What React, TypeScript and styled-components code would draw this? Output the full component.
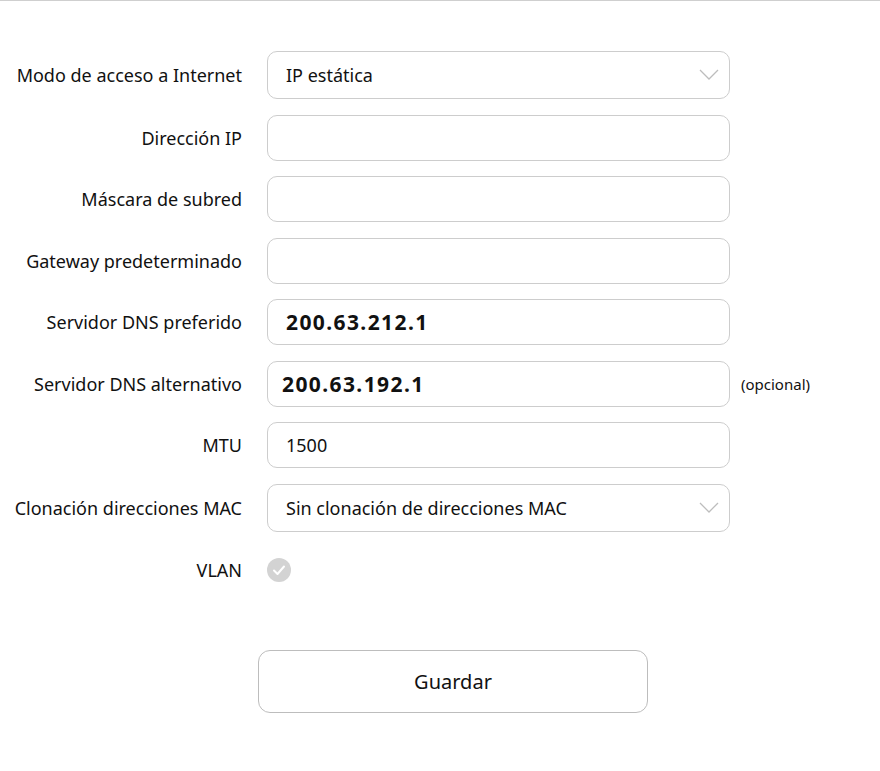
import React from "react";
import styled, { createGlobalStyle } from "styled-components";

const GlobalStyle = createGlobalStyle`
  html, body {
    margin: 0;
    padding: 0;
    background: #ffffff;
  }
  body {
    font-family: "Noto Sans", "Open Sans", sans-serif;
    color: #111111;
  }
`;

const Page = styled.div`
  border-top: 1px solid #cfcfcf;
  padding-top: 50px;
  width: 880px;
`;

const Form = styled.div`
  display: flex;
  flex-direction: column;
  gap: 15.5px;
`;

const Row = styled.div`
  display: flex;
  align-items: center;
`;

const Label = styled.div`
  width: 242px;
  margin-right: 25px;
  text-align: right;
  font-size: 18px;
  white-space: nowrap;
  color: #111111;
`;

const Field = styled.div<{ $tall?: boolean }>`
  position: relative;
  width: 463px;
  height: ${(p) => (p.$tall ? 48 : 46)}px;
  box-sizing: border-box;
  border: 1px solid #cdcdcd;
  border-radius: 10px;
  display: flex;
  align-items: center;
  padding-left: 18px;
  background: #fff;
`;

const Value = styled.span<{ $bold?: boolean; $indent?: number }>`
  font-size: ${(p) => (p.$bold ? 21 : 18)}px;
  font-weight: ${(p) => (p.$bold ? 700 : 400)};
  letter-spacing: ${(p) => (p.$bold ? 1.4 : 0)}px;
  margin-left: ${(p) => p.$indent ?? 0}px;
  color: #111111;
`;

const Chevron = styled.svg`
  position: absolute;
  right: 10px;
  top: 50%;
  margin-top: -6px;
`;

const Note = styled.span`
  margin-left: 11px;
  font-size: 15px;
  color: #111111;
`;

const RoundCheck = styled.div`
  width: 24px;
  height: 24px;
  border-radius: 50%;
  background: #d3d3d3;
  display: flex;
  align-items: center;
  justify-content: center;
`;

const VlanRow = styled(Row)`
  height: 46px;
`;

const SaveButton = styled.button`
  display: block;
  margin: 57px 0 0 258px;
  width: 390px;
  height: 63px;
  border: 1px solid #bdbdbd;
  border-radius: 12px;
  background: #fff;
  font-family: "Noto Sans", "Open Sans", sans-serif;
  font-size: 20px;
  color: #111111;
  cursor: pointer;
`;

const Arrow = () => (
  <Chevron width="20" height="12" viewBox="0 0 20 12">
    <polyline
      points="1,1 10,10 19,1"
      fill="none"
      stroke="#bdbdbd"
      strokeWidth="1.3"
    />
  </Chevron>
);

type FieldRow = {
  label: string;
  value?: string;
  bold?: boolean;
  indent?: number;
  select?: boolean;
  note?: string;
};

const rows: FieldRow[] = [
  { label: "Modo de acceso a Internet", value: "IP estática", select: true },
  { label: "Dirección IP" },
  { label: "Máscara de subred" },
  { label: "Gateway predeterminado" },
  { label: "Servidor DNS preferido", value: "200.63.212.1", bold: true },
  {
    label: "Servidor DNS alternativo",
    value: "200.63.192.1",
    bold: true,
    indent: -4,
    note: "(opcional)",
  },
  { label: "MTU", value: "1500" },
  {
    label: "Clonación direcciones MAC",
    value: "Sin clonación de direcciones MAC",
    select: true,
  },
];

export default function App() {
  return (
    <Page>
      <GlobalStyle />
      <Form>
        {rows.map((r) => (
          <Row key={r.label}>
            <Label>{r.label}</Label>
            <Field $tall={r.select}>
              {r.value && (
                <Value $bold={r.bold} $indent={r.indent}>
                  {r.value}
                </Value>
              )}
              {r.select && <Arrow />}
            </Field>
            {r.note && <Note>{r.note}</Note>}
          </Row>
        ))}
        <VlanRow>
          <Label>VLAN</Label>
          <RoundCheck>
            <svg width="14" height="12" viewBox="0 0 14 12">
              <polyline
                points="2,6.5 5.5,10 12,2.5"
                fill="none"
                stroke="#ffffff"
                strokeWidth="2"
                strokeLinecap="round"
                strokeLinejoin="round"
              />
            </svg>
          </RoundCheck>
        </VlanRow>
      </Form>
      <SaveButton>Guardar</SaveButton>
    </Page>
  );
}
